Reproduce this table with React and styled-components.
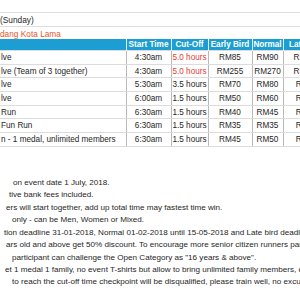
import React from 'react';
import styled, { createGlobalStyle } from 'styled-components';

const GlobalStyle = createGlobalStyle`
  html, body {
    margin: 0;
    padding: 0;
    background: #fff;
    overflow: hidden;
  }
  body {
    font-family: "Liberation Sans", Arial, sans-serif;
    font-size: 8.1px;
    color: #262626;
  }
`;

const Page = styled.div`
  width: 300px;
  height: 300px;
  overflow: hidden;
  padding-top: 12px;
  box-sizing: border-box;
`;

const InfoRow = styled.div`
  display: flex;
  align-items: center;
  width: 300px;
  height: ${(p) => p.$height}px;
  box-sizing: border-box;
  border-top: ${(p) => (p.$top ? '1px solid #dedede' : 'none')};
  border-bottom: ${(p) => (p.$bottom ? '1px solid #dedede' : 'none')};
  color: ${(p) => (p.$accent ? '#e8572c' : '#262626')};
  padding-top: ${(p) => (p.$accent ? 1 : 0)}px;
  font-size: 8.3px;
  white-space: nowrap;
`;

const Table = styled.table`
  border-collapse: collapse;
  table-layout: fixed;
  width: 330px;
  font-size: 8.2px;
`;

const HeadCell = styled.th`
  background: #1c9ed2;
  color: #fff;
  font-weight: bold;
  height: 11px;
  padding: 0;
  text-align: center;
  white-space: nowrap;
  overflow: hidden;
  border-left: 1px solid #e6f4fa;
  &:first-child {
    border-left: none;
  }
`;

const Cell = styled.td`
  height: 13.7px;
  padding: 0;
  box-sizing: border-box;
  text-align: ${(p) => (p.$left ? 'left' : 'center')};
  padding-left: ${(p) => (p.$left ? '1px' : '0')};
  color: ${(p) => (p.$red ? '#e53b36' : '#262626')};
  white-space: nowrap;
  overflow: hidden;
  border-top: 1px solid #dcdcdc;
  border-bottom: 1px solid #dcdcdc;
  border-left: 1px solid #b9b9b9;
  &:first-child {
    border-left: none;
  }
`;

const Notes = styled.div`
  margin-top: 30px;
  display: flex;
  flex-direction: column;
`;

const NoteLine = styled.div`
  line-height: 12.45px;
  padding-left: ${(p) => p.$indent}px;
  white-space: nowrap;
`;

const columns = [
  { key: 'name', label: '', width: 126 },
  { key: 'start', label: 'Start Time', width: 45 },
  { key: 'cut', label: 'Cut-Off', width: 37 },
  { key: 'early', label: 'Early Bird', width: 44 },
  { key: 'normal', label: 'Normal', width: 31 },
  { key: 'late', label: 'Late Bird', width: 47 },
];

const rows = [
  ['lve', '4:30am', '5.0 hours', 'RM85', 'RM90', 'RM100', true],
  ['lve (Team of 3 together)', '4:30am', '5.0 hours', 'RM255', 'RM270', 'RM300', true],
  ['lve', '5:30am', '3.5 hours', 'RM70', 'RM80', 'RM90'],
  ['lve', '6:00am', '1.5 hours', 'RM50', 'RM60', 'RM70'],
  [' Run', '6:30am', '1.5 hours', 'RM40', 'RM45', 'RM50'],
  ['Fun Run', '6:30am', '1.5 hours', 'RM35', 'RM35', 'RM40'],
  ['n - 1 medal, unlimited members', '6:30am', '1.5 hours', 'RM45', 'RM50', 'RM55'],
];

const notes = [
  { indent: 13, text: 'on event date 1 July, 2018.' },
  { indent: 9, text: 'tive bank fees included.' },
  { indent: 6, text: 'ers will start together, add up total time may fastest time win.' },
  { indent: 12, text: 'only - can be Men, Women or Mixed.' },
  { indent: 4, text: 'tion deadline 31-01-2018, Normal 01-02-2018 until 15-05-2018 and Late bird deadline 30-06-2018.' },
  { indent: 6, text: 'ars old and above get 50% discount. To encourage more senior citizen runners participate.' },
  { indent: 12, text: 'participant can challenge the Open Category as "16 years & above".' },
  { indent: 5, text: 'et 1 medal 1 family, no event T-shirts but allow to bring unlimited family members, enjoy.' },
  { indent: 12, text: 'to reach the cut-off time checkpoint will be disqualified, please train well, no excuses.' },
];

const App = () => (
  <Page>
    <GlobalStyle />
    <InfoRow $height={15} $top $bottom>(Sunday)</InfoRow>
    <InfoRow $height={12} $accent>dang Kota Lama</InfoRow>
    <Table>
      <colgroup>
        {columns.map((c) => (
          <col key={c.key} style={{ width: c.width }} />
        ))}
      </colgroup>
      <thead>
        <tr>
          {columns.map((c) => (
            <HeadCell key={c.key}>{c.label}</HeadCell>
          ))}
        </tr>
      </thead>
      <tbody>
        {rows.map((r, i) => (
          <tr key={i}>
            <Cell $left>{r[0]}</Cell>
            <Cell>{r[1]}</Cell>
            <Cell $red={r[6]}>{r[2]}</Cell>
            <Cell>{r[3]}</Cell>
            <Cell>{r[4]}</Cell>
            <Cell>{r[5]}</Cell>
          </tr>
        ))}
      </tbody>
    </Table>
    <Notes>
      {notes.map((n, i) => (
        <NoteLine key={i} $indent={n.indent}>{n.text}</NoteLine>
      ))}
    </Notes>
  </Page>
);

export default App;
